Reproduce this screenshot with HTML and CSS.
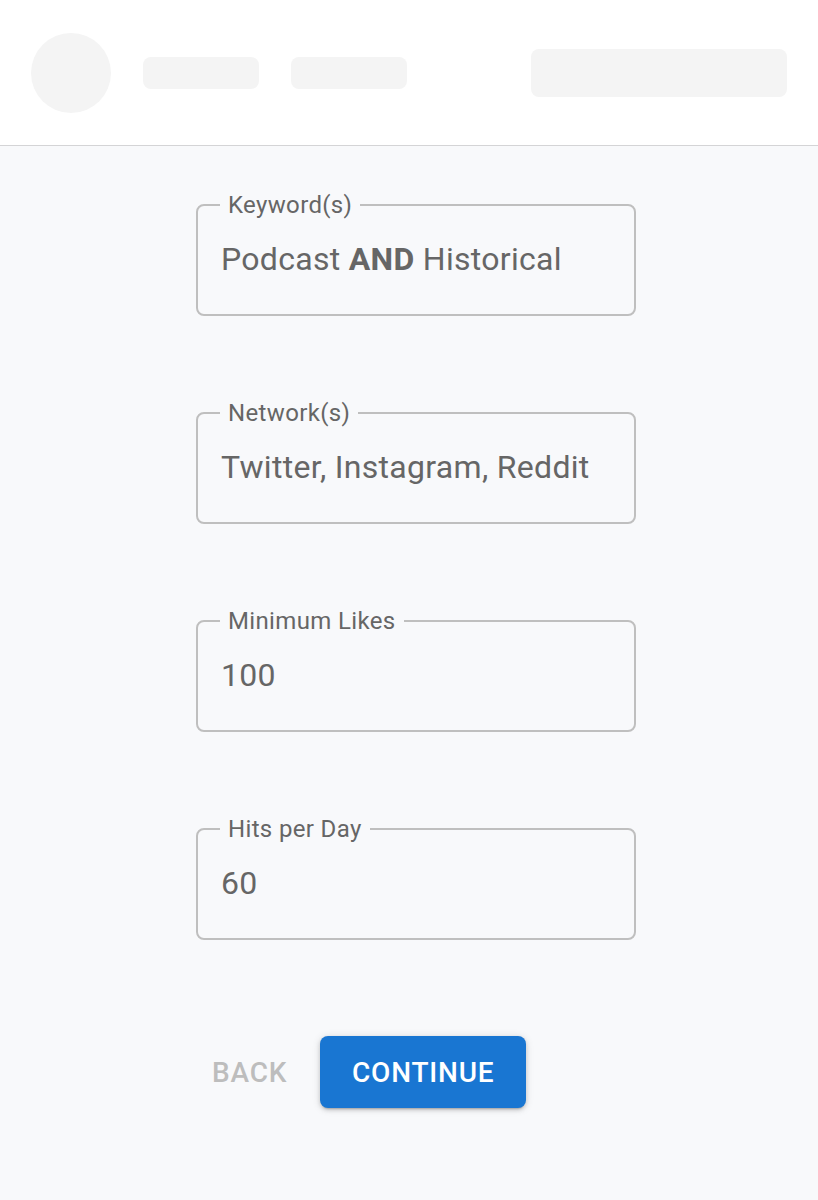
FILE: index.html
```html
<!DOCTYPE html>
<html lang="en">
<head>
<meta charset="utf-8">
<title>Search settings</title>
<link rel="stylesheet" href="styles.css">
</head>
<body>
<header class="topbar">
  <div class="avatar"></div>
  <div class="pill"></div>
  <div class="pill pill-2"></div>
  <div class="search-skel"></div>
</header>
<main class="form">
  <fieldset class="field">
    <legend>Keyword(s)</legend>
    <div class="value">Podcast <b>AND</b> Historical</div>
  </fieldset>
  <fieldset class="field">
    <legend>Network(s)</legend>
    <div class="value">Twitter, Instagram, Reddit</div>
  </fieldset>
  <fieldset class="field">
    <legend>Minimum Likes</legend>
    <div class="value">100</div>
  </fieldset>
  <fieldset class="field">
    <legend>Hits per Day</legend>
    <div class="value">60</div>
  </fieldset>
  <div class="actions">
    <button class="btn btn-back" disabled>Back</button>
    <button class="btn btn-primary">Continue</button>
  </div>
</main>
</body>
</html>
```

FILE: styles.css
```css
* { box-sizing: border-box; }
html, body { margin: 0; padding: 0; }
body {
  background: #f8f9fb;
  font-family: Roboto, "Liberation Sans", Arial, sans-serif;
  color: #666666;
  min-height: 1200px;
}
.topbar {
  height: 146px;
  background: #ffffff;
  border-bottom: 1px solid #d4d4d6;
  display: flex;
  align-items: center;
  padding: 0 31px;
}
.avatar {
  width: 80px;
  height: 80px;
  border-radius: 50%;
  background: #f4f4f4;
  margin-right: 32px;
}
.pill {
  width: 116px;
  height: 32px;
  border-radius: 8px;
  background: #f4f4f4;
  margin-right: 32px;
}
.pill-2 { margin-right: 0; }
.search-skel {
  margin-left: auto;
  width: 256px;
  height: 48px;
  border-radius: 8px;
  background: #f4f4f4;
}
.form {
  display: flex;
  flex-direction: column;
  align-items: flex-start;
  padding: 47px 0 0 196px;
  gap: 85px;
}
.field {
  width: 440px;
  margin: 0;
  padding: 0 23px 36px;
  border: 2px solid #bfbfbf;
  border-radius: 8px;
  min-inline-size: 0;
}
.field legend {
  font-size: 24px;
  line-height: 24px;
  padding: 0 8px;
  margin-left: -1px;
  color: #666666;
  letter-spacing: 0.35px;
}
.value {
  margin-top: 23px;
  font-size: 32px;
  line-height: 38px;
  color: #666666;
  letter-spacing: 0.3px;
}
.value b { font-weight: 700; }
.actions {
  display: flex;
  align-items: center;
  gap: 17px;
  margin-top: 11px;
}
.btn {
  font-family: Roboto, "Liberation Sans", Arial, sans-serif;
  font-size: 28px;
  font-weight: 500;
  letter-spacing: 0.8px;
  text-transform: uppercase;
  border: none;
  background: none;
  height: 72px;
  border-radius: 8px;
}
.btn-back {
  color: #bdbdbd;
  padding: 0 16px;
}
.btn-primary {
  background: #1976d2;
  color: #ffffff;
  width: 206px;
  padding: 0;
  box-shadow: 0 3px 2px -2px rgba(0,0,0,0.2), 0 2px 4px 0 rgba(0,0,0,0.14), 0 1px 8px 0 rgba(0,0,0,0.12);
}
```
